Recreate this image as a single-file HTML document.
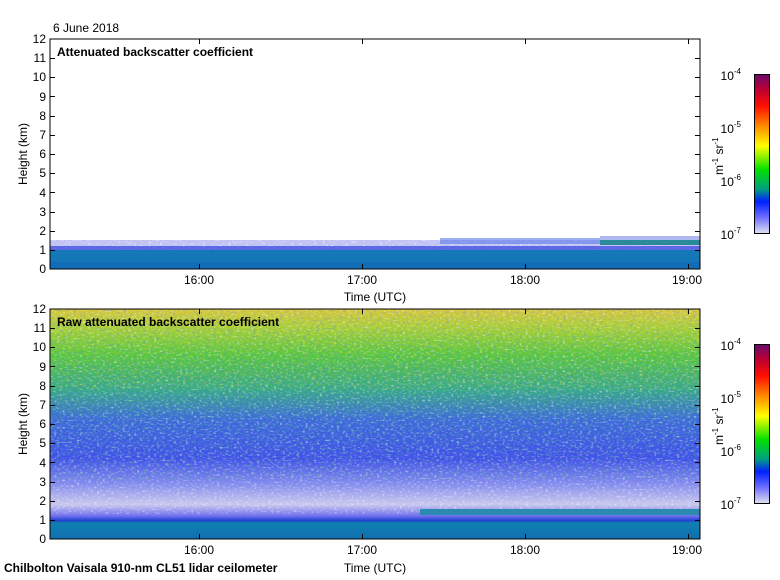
<!DOCTYPE html>
<html><head><style>
html,body{margin:0;padding:0;background:#fff;width:780px;height:580px;overflow:hidden}
svg{display:block;font-family:"Liberation Sans",sans-serif}
</style></head><body>
<svg width="780" height="580" viewBox="0 0 780 580" xmlns="http://www.w3.org/2000/svg">
<defs>
<linearGradient id="cb" x1="0" y1="0" x2="0" y2="1">
<stop offset="0" stop-color="#6a0a6a"/><stop offset="0.1" stop-color="#c00030"/>
<stop offset="0.2" stop-color="#ff1000"/><stop offset="0.33" stop-color="#ff9000"/>
<stop offset="0.45" stop-color="#ffff00"/><stop offset="0.6" stop-color="#00e000"/>
<stop offset="0.72" stop-color="#00a080"/><stop offset="0.8" stop-color="#0020ff"/>
<stop offset="0.9" stop-color="#7070ff"/><stop offset="1" stop-color="#e0e0f0"/>
</linearGradient>
<linearGradient id="raw" x1="0" y1="0" x2="0" y2="1">
<stop offset="0" stop-color="#d8c840"/><stop offset="0.08" stop-color="#a8d038"/>
<stop offset="0.2" stop-color="#58c840"/><stop offset="0.35" stop-color="#38a888"/>
<stop offset="0.48" stop-color="#3c6ad8"/><stop offset="0.65" stop-color="#4050e8"/>
<stop offset="0.75" stop-color="#8088ec"/><stop offset="0.85" stop-color="#c8c8ee"/>
<stop offset="0.9" stop-color="#7070ee"/><stop offset="0.92" stop-color="#2040d0"/>
<stop offset="0.93" stop-color="#1080b0"/><stop offset="1" stop-color="#1070b0"/>
</linearGradient>
<filter id="nz" x="0" y="0" width="100%" height="100%">
<feTurbulence type="fractalNoise" baseFrequency="0.35 0.55" numOctaves="1" seed="3"/>
<feColorMatrix values="0 0 0 0 1  0 0 0 0 1  0 0 0 0 1  0 0 0 2.4 -1.3"/>
</filter>
<filter id="nz2" x="0" y="0" width="100%" height="100%">
<feTurbulence type="fractalNoise" baseFrequency="0.3 0.5" numOctaves="1" seed="9"/>
<feColorMatrix values="0 0 0 0 0.1  0 0 0 0 0.2  0 0 0 0 1  0 0 0 2.2 -1.1"/>
</filter>
<filter id="nz3" x="0" y="0" width="100%" height="100%">
<feTurbulence type="fractalNoise" baseFrequency="0.3 0.5" numOctaves="1" seed="21"/>
<feColorMatrix values="0 0 0 0 1  0 0 0 0 0.55  0 0 0 0 0  0 0 0 2.4 -1.3"/>
</filter>
<filter id="nz4" x="0" y="0" width="100%" height="100%">
<feTurbulence type="fractalNoise" baseFrequency="0.3 0.5" numOctaves="1" seed="33"/>
<feColorMatrix values="0 0 0 0 0.1  0 0 0 0 0.8  0 0 0 0 0.1  0 0 0 2.2 -1.1"/>
</filter>
</defs>

<text x="53" y="32" font-size="12">6 June 2018</text>

<!-- TOP PLOT -->
<rect x="50" y="240" width="650" height="10" fill="#a8a8f0" opacity="0.7"/>
<rect x="50" y="240" width="650" height="10" filter="url(#nz)" opacity="0.9"/>
<rect x="50" y="246" width="650" height="4" fill="#3040e0" opacity="0.7"/>
<rect x="50" y="250" width="650" height="19" fill="#1478b8"/>
<rect x="50" y="262" width="650" height="7" fill="#1060b8" opacity="0.5"/>
<rect x="440" y="238" width="160" height="6" fill="#5a7ae8" opacity="0.6"/>
<rect x="600" y="236" width="100" height="4" fill="#b0b8f0"/>
<rect x="600" y="240" width="100" height="5" fill="#2a8a9a"/>
<rect x="50" y="39" width="650" height="230" fill="none" stroke="#000" stroke-width="1"/>
<text x="57" y="56" font-size="12" font-weight="bold">Attenuated backscatter coefficient</text>

<!-- BOTTOM PLOT -->
<rect x="50" y="309" width="650" height="230" fill="url(#raw)"/>
<rect x="50" y="309" width="650" height="80" filter="url(#nz3)" opacity="0.6"/>
<rect x="50" y="380" width="650" height="100" filter="url(#nz4)" opacity="0.5"/>
<rect x="50" y="309" width="650" height="205" filter="url(#nz)" opacity="0.75"/>
<rect x="50" y="309" width="650" height="180" filter="url(#nz2)" opacity="0.5"/>
<rect x="420" y="509" width="280" height="6" fill="#2a8ab0"/>
<rect x="50" y="309" width="650" height="230" fill="none" stroke="#000" stroke-width="1"/>
<text x="57" y="326" font-size="12" font-weight="bold">Raw attenuated backscatter coefficient</text>

<g font-size="12" text-anchor="end" id="yl">
<text x="46" y="43">12</text><text x="46" y="62">11</text><text x="46" y="81">10</text>
<text x="46" y="101">9</text><text x="46" y="120">8</text><text x="46" y="139">7</text>
<text x="46" y="158">6</text><text x="46" y="177">5</text><text x="46" y="197">4</text>
<text x="46" y="216">3</text><text x="46" y="235">2</text><text x="46" y="254">1</text>
<text x="46" y="273">0</text>
</g>
<use href="#yl" y="270"/>

<g stroke="#000" stroke-width="1" id="tk">
<path d="M50 58.5h5M50 77.5h5M50 96.5h5M50 116.5h5M50 135.5h5M50 154.5h5M50 173.5h5M50 192.5h5M50 212.5h5M50 231.5h5M50 250.5h5
M700 58.5h-5M700 77.5h-5M700 96.5h-5M700 116.5h-5M700 135.5h-5M700 154.5h-5M700 173.5h-5M700 192.5h-5M700 212.5h-5M700 231.5h-5M700 250.5h-5
M199.5 269v-5M362.5 269v-5M525.5 269v-5M688.5 269v-5M199.5 39v5M362.5 39v5M525.5 39v5M688.5 39v5"/>
</g>
<use href="#tk" y="270"/>

<g font-size="12" text-anchor="middle">
<text x="199" y="284">16:00</text><text x="362" y="284">17:00</text><text x="525" y="284">18:00</text><text x="687" y="284">19:00</text>
<text x="375" y="301">Time (UTC)</text>
<text x="199" y="554">16:00</text><text x="362" y="554">17:00</text><text x="525" y="554">18:00</text><text x="687" y="554">19:00</text>
<text x="375" y="572">Time (UTC)</text>
<text transform="translate(27,154) rotate(-90)">Height (km)</text>
<text transform="translate(27,424) rotate(-90)">Height (km)</text>
</g>
<text x="4" y="572" font-size="12" font-weight="bold">Chilbolton Vaisala 910-nm CL51 lidar ceilometer</text>

<!-- COLORBARS -->
<g id="cbar">
<rect x="754.5" y="74.5" width="15" height="159" fill="url(#cb)" stroke="#000"/>
<g font-size="12" text-anchor="end">
<text x="741" y="80">10<tspan font-size="8" dy="-6">-4</tspan></text>
<text x="741" y="133">10<tspan font-size="8" dy="-6">-5</tspan></text>
<text x="741" y="186">10<tspan font-size="8" dy="-6">-6</tspan></text>
<text x="741" y="239">10<tspan font-size="8" dy="-6">-7</tspan></text>
</g>
<text transform="translate(723,175) rotate(-90)" font-size="12">m<tspan font-size="8" dy="-5">-1</tspan><tspan dy="5"> sr</tspan><tspan font-size="8" dy="-5">-1</tspan></text>
</g>
<use href="#cbar" y="270"/>
</svg>
</body></html>
